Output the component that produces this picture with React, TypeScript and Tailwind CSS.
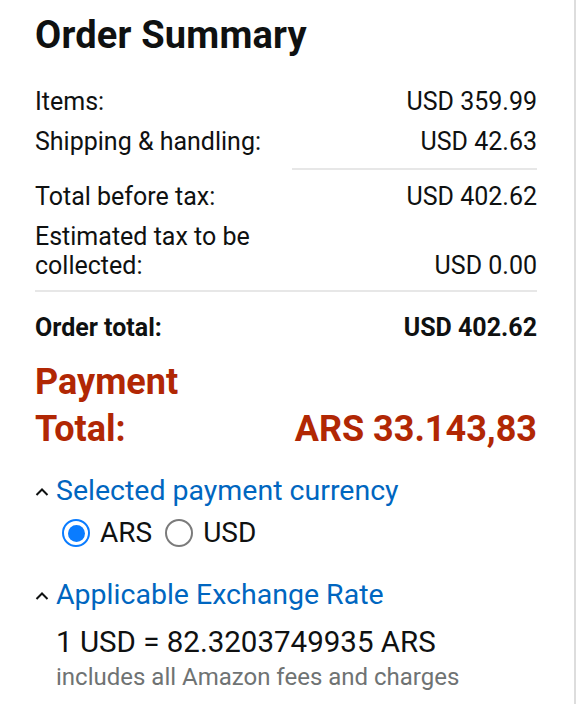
const FONT = "font-['Roboto',Arial,sans-serif]";

function Caret() {
  return (
    <svg width="14" height="8" viewBox="0 0 14 8" className="shrink-0 mt-[15px]">
      <polyline points="1.5,7 7,1.5 12.5,7" fill="none" stroke="#0f1111" strokeWidth="2" />
    </svg>
  );
}

function Row({ label, value, bold }: { label: string; value: string; bold?: boolean }) {
  return (
    <div className={`flex justify-between items-end text-[25px] leading-[40px] ${bold ? 'font-bold' : ''}`}>
      <span>{label}</span>
      <span>{value}</span>
    </div>
  );
}

export default function App() {
  return (
    <div className={`${FONT} w-[576px] h-[704px] bg-white text-[#0f1111] flex`}>
      <div className="flex-1 pl-[35px] pr-[37px] pt-[13px]">
        <h1 className="text-[38px] font-bold leading-[44px] tracking-[0.2px]">Order Summary</h1>

        <div className="mt-[25px]">
          <Row label="Items:" value="USD 359.99" />
          <Row label="Shipping & handling:" value="USD 42.63" />
        </div>
        <div className="flex justify-end mt-[6px]">
          <div className="w-[245px] h-[2px] bg-[#e7e7e7]" />
        </div>

        <div className="mt-[7px]">
          <Row label="Total before tax:" value="USD 402.62" />
        </div>
        <div className="flex justify-between items-end text-[25px] leading-[29px] mt-[5px]">
          <span>Estimated tax to be<br />collected:</span>
          <span>USD 0.00</span>
        </div>
        <div className="h-[2px] bg-[#e7e7e7] mt-[10px]" />

        <div className="mt-[16px]">
          <Row label="Order total:" value="USD 402.62" bold />
        </div>

        <div className="flex justify-between items-end text-[#b12704] font-bold text-[36px] leading-[47px] mt-[11px]">
          <span>Payment<br />Total:</span>
          <span>ARS 33.143,83</span>
        </div>

        <div className="mt-[20px] flex items-start gap-[7px] text-[28.5px] leading-[36px]">
          <Caret />
          <span className="text-[#0066c0]">Selected payment currency</span>
        </div>
        <div className="flex items-center pl-[27px] text-[28px] leading-[36px] mt-[6px]">
          <span className="w-[28px] h-[28px] rounded-full border-[2px] border-[#0a7cff] flex items-center justify-center">
            <span className="w-[17px] h-[17px] rounded-full bg-[#0a7cff]" />
          </span>
          <span className="ml-[10px]">ARS</span>
          <span className="ml-[13px] w-[28px] h-[28px] rounded-full border-[2px] border-[#7b7b7b]" />
          <span className="ml-[10px]">USD</span>
        </div>

        <div className="mt-[26px] flex items-start gap-[7px] text-[28.5px] leading-[36px]">
          <Caret />
          <span className="text-[#0066c0]">Applicable Exchange Rate</span>
        </div>
        <div className="pl-[21px] text-[29.5px] leading-[36px] mt-[11px]">1 USD = 82.3203749935 ARS</div>
        <div className="pl-[21px] text-[24px] leading-[30px] text-[#6f7373] mt-[2px]">includes all Amazon fees and charges</div>
      </div>
      <div className="w-[2px] bg-[#dddddd]" />
    </div>
  );
}
